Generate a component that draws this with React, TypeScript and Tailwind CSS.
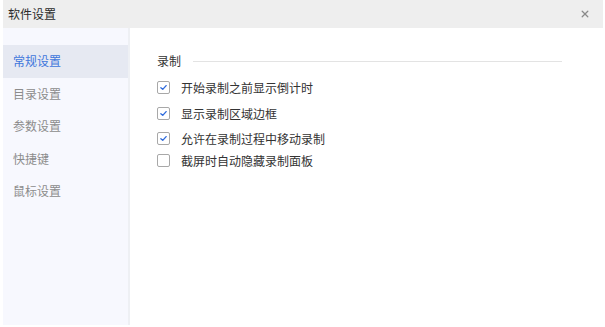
import React from "react";

const menu = ["常规设置", "目录设置", "参数设置", "快捷键", "鼠标设置"];

const options = [
  { label: "开始录制之前显示倒计时", checked: true, mt: "mt-[11px]" },
  { label: "显示录制区域边框", checked: true, mt: "mt-[13px]" },
  { label: "允许在录制过程中移动录制", checked: true, mt: "mt-[12px]" },
  { label: "截屏时自动隐藏录制面板", checked: false, mt: "mt-[9px]" },
];

function Checkbox({ checked }: { checked: boolean }) {
  return (
    <span className="flex h-[13px] w-[13px] items-center justify-center rounded-[2px] border border-[#a8a8a8] bg-white">
      {checked && (
        <svg viewBox="0 0 12 12" className="h-[9px] w-[9px]" fill="none" stroke="#2f6bdc" strokeWidth="1.8" strokeLinecap="round" strokeLinejoin="round">
          <path d="M2.5 6.2 5 8.5 9.5 3.5" />
        </svg>
      )}
    </span>
  );
}

export default function App() {
  return (
    <div
      className="flex h-[327px] w-[605px] flex-col bg-white pb-[2px] pl-[3px] pr-[2px] text-[12px]"
      style={{ fontFamily: '"Noto Sans CJK SC", "Noto Sans", sans-serif' }}
    >
      <div className="flex h-[28px] shrink-0 items-center justify-between bg-[#eeeeee] pl-[5px] pr-[14px]">
        <span className="text-[12px] text-[#2b2b2b]">软件设置</span>
        <svg viewBox="0 0 10 10" className="h-[8px] w-[8px]" stroke="#8a8a8a" strokeWidth="1.6" strokeLinecap="round">
          <path d="M1.5 1.5 8.5 8.5M8.5 1.5 1.5 8.5" />
        </svg>
      </div>
      <div className="flex flex-1">
        <div className="w-[127px] shrink-0 border-r-2 border-[#eef0f4] bg-[#f7f8fe] pt-[17px]">
          {menu.map((m, i) => (
            <div
              key={m}
              className={
                "flex h-[32.5px] items-center pl-[10px] " +
                (i === 0 ? "bg-[#e6e9f2] text-[#3f77dc]" : "text-[#8c8c8c]")
              }
            >
              {m}
            </div>
          ))}
        </div>
        <div className="flex-1 pl-[27px] pr-[41px] pt-[24px]">
          <div className="flex items-center gap-[12px]">
            <span className="text-[#333333]">录制</span>
            <span className="h-px flex-1 bg-[#e3e3e3]" />
          </div>
          {options.map((o) => (
            <div key={o.label} className={"flex items-center gap-[11px] " + o.mt}>
              <Checkbox checked={o.checked} />
              <span className="leading-[13px] text-[#333333]">{o.label}</span>
            </div>
          ))}
        </div>
      </div>
    </div>
  );
}
